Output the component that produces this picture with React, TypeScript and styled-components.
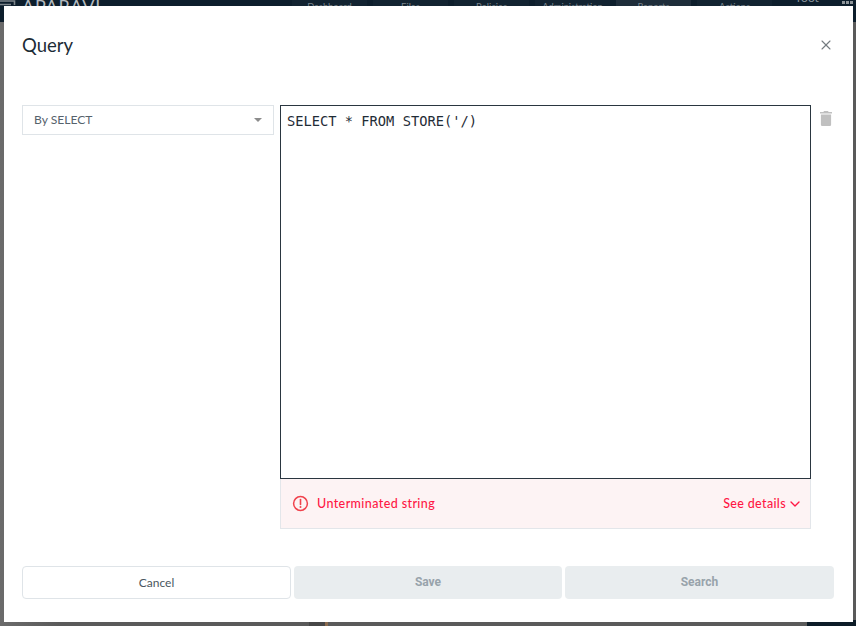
import React from "react";
import styled, { createGlobalStyle } from "styled-components";
import { X, ChevronDown } from "lucide-react";

const uiFont = `Lato, "Noto Sans", sans-serif`;

const navItems = ["Dashboard", "Files", "Policies", "Administration", "Reports", "Actions"];

export default function App() {
  return (
    <>
      <GlobalStyle />
      <Page>
        <TopBar>
          <Logo>
            <LogoMark width="16" height="8" viewBox="0 0 16 8">
              <path d="M0 1 H14.5 V5 M0 4.5 H11" fill="none" stroke="#7d858b" strokeWidth="1.6" />
            </LogoMark>
            <LogoText>APARAVI</LogoText>
          </Logo>
          <Nav>
            {navItems.map((item) => (
              <NavTab key={item} $active={item === "Reports"}>
                {item}
              </NavTab>
            ))}
          </Nav>
          <UserName>root</UserName>
          <Dots>
            <i />
            <i />
            <i />
          </Dots>
        </TopBar>
        <Backdrop>
          <BottomMark />
          <BottomBlock />
        </Backdrop>

        <Modal>
          <ModalHeader>
            <Title>Query</Title>
            <CloseButton>
              <X size={16} strokeWidth={1.6} />
            </CloseButton>
          </ModalHeader>

          <QueryRow>
            <Select>
              <span>By SELECT</span>
              <Caret />
            </Select>
            <EditorColumn>
              <Editor>SELECT * FROM STORE('/)</Editor>
              <ErrorBar>
                <ErrorMessage>
                  <svg width="17" height="17" viewBox="0 0 17 17" fill="none">
                    <circle cx="8.5" cy="8.5" r="6.9" stroke="#f0424c" strokeWidth="1.5" />
                    <path d="M8.5 4.6 V9.4" stroke="#f0424c" strokeWidth="1.6" strokeLinecap="round" />
                    <circle cx="8.5" cy="12" r="1" fill="#f0424c" />
                  </svg>
                  <span>Unterminated string</span>
                </ErrorMessage>
                <DetailsLink>
                  <span>See details</span>
                  <ChevronDown size={16} strokeWidth={2} />
                </DetailsLink>
              </ErrorBar>
            </EditorColumn>
            <TrashButton>
              <svg width="12" height="15" viewBox="0 0 12 15" fill="#c0c0c0">
                <path d="M4 0 H8 L8.6 1 H12 V2.6 H0 V1 H3.4 Z" />
                <path d="M.9 3.6 H11.1 V13.4 C11.1 14.3 10.4 15 9.5 15 H2.5 C1.6 15 .9 14.3 .9 13.4 Z" />
              </svg>
            </TrashButton>
          </QueryRow>

          <Footer>
            <CancelButton>Cancel</CancelButton>
            <DisabledButton>Save</DisabledButton>
            <DisabledButton>Search</DisabledButton>
          </Footer>
        </Modal>
      </Page>
    </>
  );
}

const GlobalStyle = createGlobalStyle`
  html, body {
    margin: 0;
    padding: 0;
    height: 100%;
    overflow: hidden;
    background: #5a5a5a;
  }
  * {
    box-sizing: border-box;
  }
`;

const Page = styled.div`
  position: relative;
  width: 856px;
  height: 626px;
  display: flex;
  flex-direction: column;
  overflow: hidden;
`;

const TopBar = styled.div`
  height: 22px;
  flex-shrink: 0;
  display: flex;
  align-items: flex-start;
  background: #0d1e2c;
`;

const Logo = styled.div`
  width: 292px;
  display: flex;
  align-items: flex-start;
  gap: 6px;
`;

const LogoMark = styled.svg`
  flex-shrink: 0;
`;

const LogoText = styled.div`
  font: 400 18px/1 ${uiFont};
  letter-spacing: 0.7px;
  color: #b4babf;
  margin-top: -3px;
`;

const Nav = styled.div`
  display: flex;
  gap: 6px;
`;

const NavTab = styled.div<{ $active?: boolean }>`
  width: 75px;
  height: 22px;
  text-align: center;
  font: 400 9.4px/14px ${uiFont};
  color: #79848c;
  background: ${(p) => (p.$active ? "#1e2d3a" : "#122331")};
`;

const UserName = styled.div`
  margin-left: 25px;
  margin-top: -9px;
  font: 400 12px/14px ${uiFont};
  color: #8a949b;
`;

const Dots = styled.div`
  margin-left: 23px;
  margin-top: 1px;
  display: flex;
  gap: 1px;

  i {
    display: block;
    width: 3px;
    height: 3px;
    background: #8d9499;
  }
`;

const Backdrop = styled.div`
  flex: 1;
  position: relative;
  background: linear-gradient(90deg, #6b6b6b 0, #5a5a5a 60px, #5a5a5a 100%);
`;

const BottomMark = styled.div`
  position: absolute;
  left: 309px;
  bottom: 0;
  width: 19px;
  height: 4px;
  background: #474747;
  border-right: 3px solid #8a6a4e;
`;

const BottomBlock = styled.div`
  position: absolute;
  right: 0;
  bottom: 0;
  width: 49px;
  height: 6px;
  background: #0d1c28;
`;

const Modal = styled.div`
  position: absolute;
  left: 4px;
  top: 6px;
  width: 849px;
  height: 616px;
  padding: 0 19px 0 18px;
  background: #fff;
  display: flex;
  flex-direction: column;
`;

const ModalHeader = styled.div`
  height: 99px;
  flex-shrink: 0;
  display: flex;
  justify-content: space-between;
  align-items: flex-start;
`;

const Title = styled.div`
  margin-top: 27px;
  font: 400 18.5px/24px ${uiFont};
  color: #1c2b36;
`;

const CloseButton = styled.div`
  margin-top: 31px;
  width: 16px;
  height: 16px;
  display: flex;
  color: #747b80;
`;

const QueryRow = styled.div`
  display: flex;
  align-items: flex-start;
`;

const Select = styled.div`
  width: 252px;
  height: 30px;
  padding: 0 11px;
  flex-shrink: 0;
  display: flex;
  align-items: center;
  justify-content: space-between;
  border: 1px solid #dfe4e8;
  font: 400 12.1px/1 ${uiFont};
  color: #56626c;
`;

const Caret = styled.span`
  width: 0;
  height: 0;
  border-left: 4px solid transparent;
  border-right: 4px solid transparent;
  border-top: 4px solid #8c8c8c;
`;

const EditorColumn = styled.div`
  width: 531px;
  margin-left: 6px;
  flex-shrink: 0;
`;

const Editor = styled.div`
  height: 374px;
  padding: 6px 6px;
  border: 1px solid #2a3640;
  font: 400 13.72px/19px "DejaVu Sans Mono", monospace;
  color: #1f2c36;
  white-space: pre;
`;

const ErrorBar = styled.div`
  height: 50px;
  padding: 0 7px 0 11px;
  display: flex;
  align-items: center;
  justify-content: space-between;
  background: #fdf3f4;
  border: 1px solid #e3e6ea;
  border-top: none;
  font: 500 12.5px/1 ${uiFont};
  color: #ff1744;

  span {
    position: relative;
    top: 1px;
  }
`;

const ErrorMessage = styled.div`
  display: flex;
  align-items: center;
  gap: 8px;
  letter-spacing: 0.4px;
`;

const DetailsLink = styled.div`
  display: flex;
  align-items: center;
  gap: 1px;
  letter-spacing: 0.35px;
`;

const TrashButton = styled.div`
  margin-left: 9px;
  margin-top: 6px;
  width: 12px;
  display: flex;
`;

const Footer = styled.div`
  margin-top: 37px;
  width: 812px;
  display: grid;
  grid-template-columns: 269px 268px 269px;
  column-gap: 3px;
`;

const CancelButton = styled.div`
  height: 33px;
  display: flex;
  align-items: center;
  justify-content: center;
  border: 1px solid #dfe4e8;
  border-radius: 4px;
  font: 400 12px/1 ${uiFont};
  color: #4a5660;
`;

const DisabledButton = styled.div`
  height: 33px;
  padding-bottom: 1px;
  display: flex;
  align-items: center;
  justify-content: center;
  border-radius: 4px;
  background: #e9edef;
  font: 700 12px/1 Roboto, sans-serif;
  color: #98a3ab;
`;
